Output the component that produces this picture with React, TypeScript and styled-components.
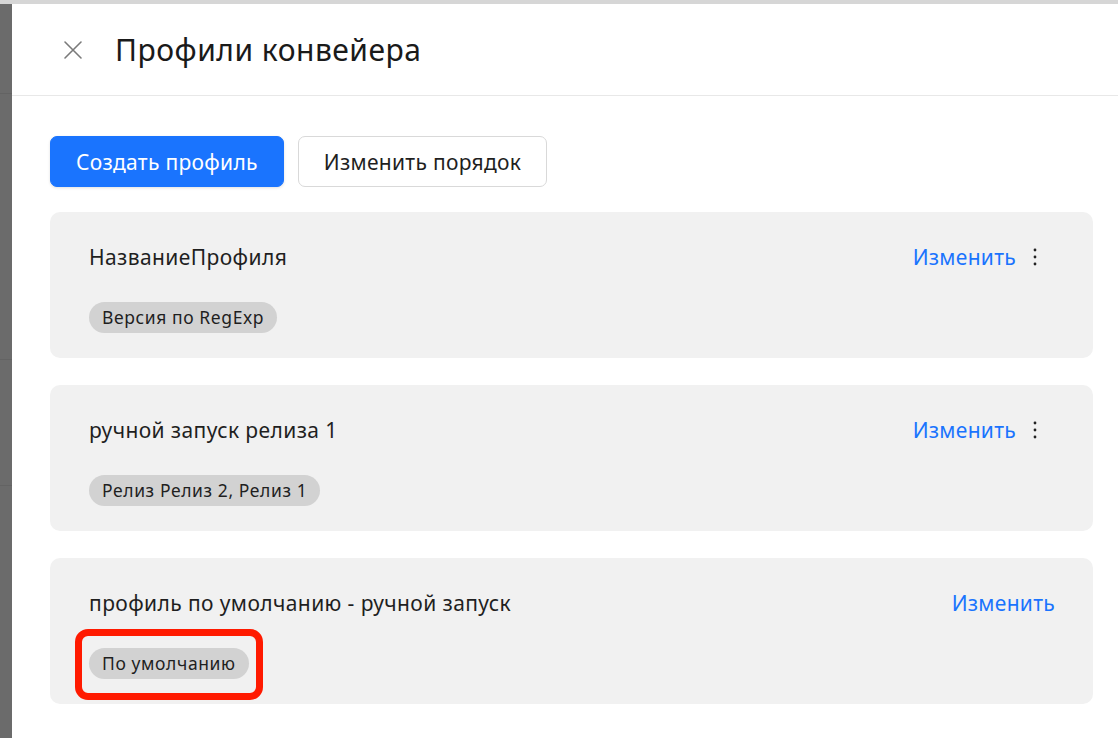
import React from "react";
import styled, { createGlobalStyle } from "styled-components";

const GlobalStyle = createGlobalStyle`
  html, body {
    margin: 0;
    padding: 0;
    background: #ffffff;
  }
  body {
    font-family: "Noto Sans", "Open Sans", sans-serif;
    color: #1f1f1f;
  }
`;

interface Profile {
  name: string;
  tag: string;
  menu: boolean;
  highlighted?: boolean;
}

const profiles: Profile[] = [
  { name: "НазваниеПрофиля", tag: "Версия по RegExp", menu: true },
  { name: "ручной запуск релиза 1", tag: "Релиз Релиз 2, Релиз 1", menu: true },
  {
    name: "профиль по умолчанию - ручной запуск",
    tag: "По умолчанию",
    menu: false,
    highlighted: true,
  },
];

const Screen = styled.div`
  width: 1118px;
  height: 738px;
  overflow: hidden;
  display: flex;
  flex-direction: column;
`;

const TopStrip = styled.div`
  height: 4px;
  background: #d6d6d6;
  flex-shrink: 0;
`;

const Body = styled.div`
  flex: 1;
  display: flex;
`;

const Backdrop = styled.div`
  width: 12px;
  background: #6b6b6b;
  display: flex;
  flex-direction: column;
`;

const BackdropRow = styled.div<{ $h: number }>`
  height: ${(p) => p.$h}px;
  border-bottom: 1px solid #636363;
`;

const Drawer = styled.div`
  flex: 1;
  background: #ffffff;
  display: flex;
  flex-direction: column;
`;

const Header = styled.div`
  height: 92px;
  display: flex;
  align-items: center;
  padding-left: 49px;
  gap: 30px;
  border-bottom: 1px solid #e8e8e8;
  box-sizing: border-box;
`;

const CloseButton = styled.button`
  width: 24px;
  height: 24px;
  padding: 0;
  border: none;
  background: none;
  display: flex;
  align-items: center;
  justify-content: center;
  cursor: pointer;
`;

const Title = styled.h1`
  margin: 0;
  font-size: 30px;
  font-weight: 400;
  color: #1a1a1a;
  letter-spacing: 0.5px;
`;

const Content = styled.div`
  padding: 40px 25px 0 38px;
  display: flex;
  flex-direction: column;
`;

const Toolbar = styled.div`
  display: flex;
  gap: 14px;
  margin-bottom: 25px;
`;

const Button = styled.button<{ $primary?: boolean }>`
  height: 51px;
  padding: 0 25px;
  border-radius: 7px;
  font-family: inherit;
  font-size: 21px;
  letter-spacing: 0.3px;
  cursor: pointer;
  border: 1px solid ${(p) => (p.$primary ? "#1a74fe" : "#d9d9d9")};
  background: ${(p) => (p.$primary ? "#1a74fe" : "#ffffff")};
  color: ${(p) => (p.$primary ? "#ffffff" : "#1f1f1f")};
  box-shadow: ${(p) => (p.$primary ? "0 1px 3px rgba(0,0,0,0.12)" : "none")};
`;

const CardList = styled.div`
  display: flex;
  flex-direction: column;
  gap: 27px;
`;

const Card = styled.div`
  position: relative;
  background: #f1f1f1;
  border-radius: 10px;
  height: 146px;
  box-sizing: border-box;
  padding: 30px 38px 0 39px;
  display: flex;
  flex-direction: column;
  gap: 30px;
`;

const CardHead = styled.div`
  display: flex;
  align-items: center;
  justify-content: space-between;
  height: 30px;
`;

const CardName = styled.div`
  font-size: 21px;
  letter-spacing: 0.4px;
  color: #1f1f1f;
`;

const Actions = styled.div`
  display: flex;
  align-items: center;
`;

const EditLink = styled.a`
  font-size: 21px;
  letter-spacing: 0.3px;
  color: #1a74fe;
  cursor: pointer;
`;

const MenuButton = styled.span`
  width: 20px;
  display: flex;
  justify-content: center;
  margin-left: 9px;
  margin-right: 10px;
`;

const Tag = styled.span`
  align-self: flex-start;
  height: 31px;
  line-height: 31px;
  padding: 0 13px;
  border-radius: 16px;
  background: #d2d2d2;
  font-size: 17.5px;
  letter-spacing: 0.6px;
  color: #1f1f1f;
`;

const Highlight = styled.div`
  position: absolute;
  left: 25px;
  top: 71px;
  width: 188px;
  height: 71px;
  border: 7px solid #ff1a00;
  border-radius: 13px;
  box-sizing: border-box;
`;

const CloseIcon = () => (
  <svg width="20" height="20" viewBox="0 0 20 20">
    <path d="M2 2 L18 18 M18 2 L2 18" stroke="#7a7a7a" strokeWidth="1.6" strokeLinecap="round" />
  </svg>
);

const DotsIcon = () => (
  <svg width="6" height="20" viewBox="0 0 6 20">
    <circle cx="3" cy="3" r="1.4" fill="#222" />
    <circle cx="3" cy="10" r="1.4" fill="#222" />
    <circle cx="3" cy="17" r="1.4" fill="#222" />
  </svg>
);

export default function App() {
  return (
    <Screen>
      <GlobalStyle />
      <TopStrip />
      <Body>
        <Backdrop>
          <BackdropRow $h={89} />
          <BackdropRow $h={265} />
          <BackdropRow $h={125} />
        </Backdrop>
        <Drawer>
          <Header>
            <CloseButton>
              <CloseIcon />
            </CloseButton>
            <Title>Профили конвейера</Title>
          </Header>
          <Content>
            <Toolbar>
              <Button $primary>Создать профиль</Button>
              <Button>Изменить порядок</Button>
            </Toolbar>
            <CardList>
              {profiles.map((p) => (
                <Card key={p.name}>
                  <CardHead>
                    <CardName>{p.name}</CardName>
                    <Actions>
                      <EditLink>Изменить</EditLink>
                      {p.menu && (
                        <MenuButton>
                          <DotsIcon />
                        </MenuButton>
                      )}
                    </Actions>
                  </CardHead>
                  <Tag>{p.tag}</Tag>
                  {p.highlighted && <Highlight />}
                </Card>
              ))}
            </CardList>
          </Content>
        </Drawer>
      </Body>
    </Screen>
  );
}
